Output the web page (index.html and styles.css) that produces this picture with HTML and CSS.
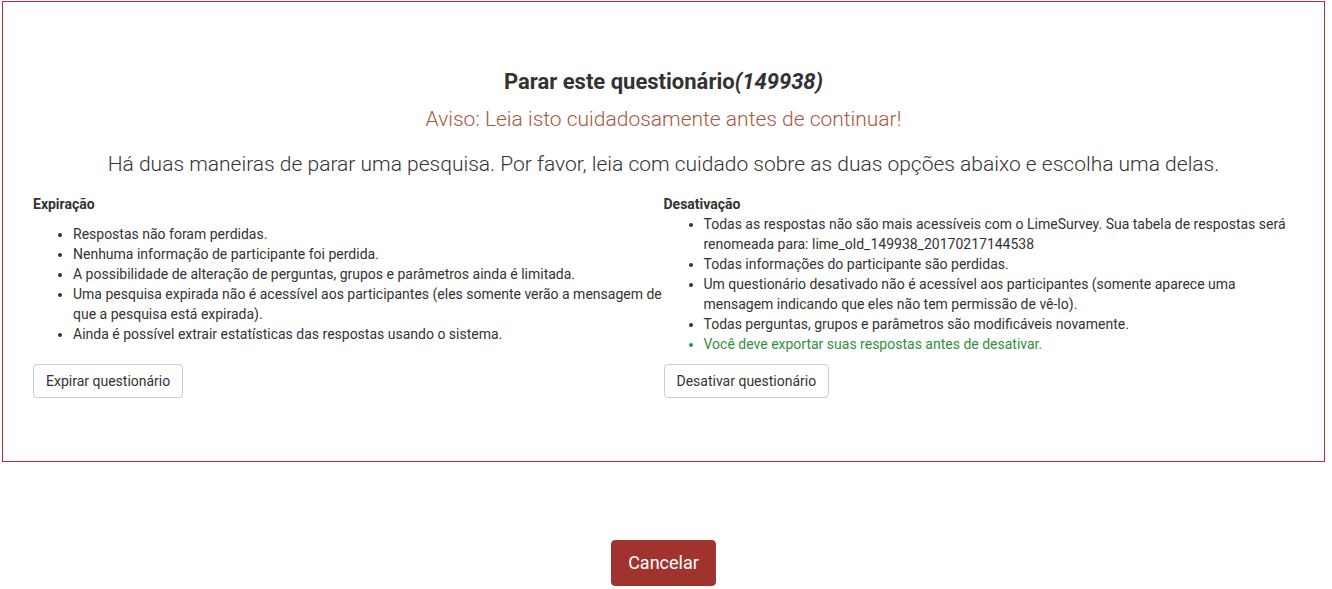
FILE: index.html
```html
<html>
  <head>
    <title>Parar este questionário</title>
    <link rel="stylesheet" href="styles.css">
  </head>
  <body>
    <section class="panel">
      <h3 class="title">Parar este questionário<em>(149938)</em></h3>
      <p class="warning">Aviso: Leia isto cuidadosamente antes de continuar!</p>
      <p class="lead">Há duas maneiras de parar uma pesquisa. Por favor, leia com cuidado sobre as duas opções abaixo e escolha uma delas.</p>

      <div class="options">
        <div class="option">
          <strong>Expiração</strong>
          <ul class="spaced">
            <li>Respostas não foram perdidas.</li>
            <li>Nenhuma informação de participante foi perdida.</li>
            <li>A possibilidade de alteração de perguntas, grupos e parâmetros ainda é limitada.</li>
            <li>Uma pesquisa expirada não é acessível aos participantes (eles somente verão a mensagem de que a pesquisa está expirada).</li>
            <li>Ainda é possível extrair estatísticas das respostas usando o sistema.</li>
          </ul>
        </div>
        <div class="option">
          <strong>Desativação</strong>
          <ul>
            <li>Todas as respostas não são mais acessíveis com o LimeSurvey. Sua tabela de respostas será renomeada para: lime_old_149938_20170217144538</li>
            <li>Todas informações do participante são perdidas.</li>
            <li>Um questionário desativado não é acessível aos participantes (somente aparece uma mensagem indicando que eles não tem permissão de vê-lo).</li>
            <li>Todas perguntas, grupos e parâmetros são modificáveis novamente.</li>
            <li class="success">Você deve exportar suas respostas antes de desativar.</li>
          </ul>
        </div>
        <div><button class="btn">Expirar questionário</button></div>
        <div><button class="btn">Desativar questionário</button></div>
      </div>
    </section>

    <div class="actions">
      <button class="btn btn-cancel">Cancelar</button>
    </div>
  </body>
</html>
```

FILE: styles.css
```css
:root {
  --fonts: Roboto, "Liberation Sans", sans-serif;
  --text: #333333;
  --panel-border: #a8342d;
  --warning: #a9583a;
  --success: #328f3a;
  --danger: #a0332e;
}

body {
  font-family: var(--fonts);
  font-size: 14px;
  line-height: 20px;
  color: var(--text);
  margin: 0;
  padding: 1px 7px 0 2px;
  background: #ffffff;
}

.panel {
  border: 1px solid var(--panel-border);
  padding: 66px 30px 63px 30px;
}

.title {
  margin: 0;
  text-align: center;
  font-size: 22px;
  line-height: 28px;
  font-weight: 700;
}

.title em {
  font-style: italic;
}

.warning {
  margin: 9px 0 0 0;
  text-align: center;
  font-size: 21px;
  line-height: 28px;
  font-weight: 300;
  color: var(--warning);
}

.lead {
  margin: 15px 0 0 0;
  text-align: center;
  font-size: 21px;
  line-height: 32px;
  font-weight: 300;
}

.options {
  display: grid;
  grid-template-columns: 1fr 1fr;
  margin-top: 14px;
}

.option strong {
  display: block;
  font-size: 14px;
}

.option ul {
  margin: 0 0 10px 0;
  padding-left: 40px;
}

.option ul.spaced {
  margin-top: 10px;
}

.success {
  color: var(--success);
}

.btn {
  font-family: var(--fonts);
  font-size: 14px;
  line-height: 20px;
  color: var(--text);
  background: #ffffff;
  border: 1px solid #cccccc;
  border-radius: 4px;
  padding: 6px 12px;
}

.actions {
  display: flex;
  justify-content: center;
  margin-top: 78px;
}

.btn-cancel {
  background: var(--danger);
  border-color: var(--danger);
  color: #ffffff;
  font-size: 18px;
  line-height: 24px;
  padding: 10px 16px;
}
```
